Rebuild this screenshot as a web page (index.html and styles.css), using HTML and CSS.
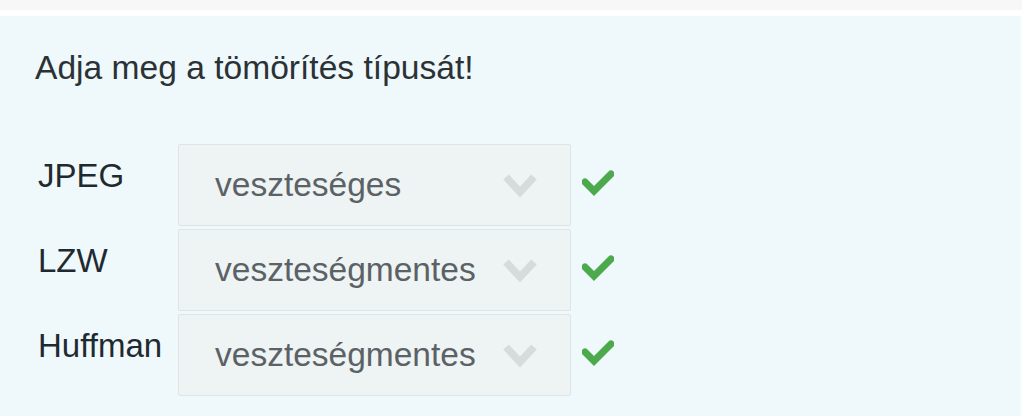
FILE: index.html
```html
<!DOCTYPE html>
<html lang="hu">
<head>
<meta charset="utf-8">
<title>Tömörítés</title>
<link rel="stylesheet" href="styles.css">
</head>
<body>
<div class="topbar"></div>
<div class="gap"></div>
<main class="panel">
  <p class="question">Adja meg a tömörítés típusát!</p>
  <div class="rows">
    <div class="row">
      <span class="label">JPEG</span>
      <div class="select">
        <span class="value">veszteséges</span>
        <svg class="chev" width="36" height="25" viewBox="0 0 36 25"><polyline points="4,4 18,19 32,4" fill="none" stroke="#d6dbdb" stroke-width="7.5" stroke-linejoin="miter"/></svg>
      </div>
      <svg class="check" width="32" height="26" viewBox="0 0 32 26"><polyline points="3,12 12,21 29,4" fill="none" stroke="#4caa4c" stroke-width="7" stroke-linecap="round" stroke-linejoin="miter"/></svg>
    </div>
    <div class="row">
      <span class="label">LZW</span>
      <div class="select">
        <span class="value">veszteségmentes</span>
        <svg class="chev" width="36" height="25" viewBox="0 0 36 25"><polyline points="4,4 18,19 32,4" fill="none" stroke="#d6dbdb" stroke-width="7.5" stroke-linejoin="miter"/></svg>
      </div>
      <svg class="check" width="32" height="26" viewBox="0 0 32 26"><polyline points="3,12 12,21 29,4" fill="none" stroke="#4caa4c" stroke-width="7" stroke-linecap="round" stroke-linejoin="miter"/></svg>
    </div>
    <div class="row">
      <span class="label">Huffman</span>
      <div class="select">
        <span class="value">veszteségmentes</span>
        <svg class="chev" width="36" height="25" viewBox="0 0 36 25"><polyline points="4,4 18,19 32,4" fill="none" stroke="#d6dbdb" stroke-width="7.5" stroke-linejoin="miter"/></svg>
      </div>
      <svg class="check" width="32" height="26" viewBox="0 0 32 26"><polyline points="3,12 12,21 29,4" fill="none" stroke="#4caa4c" stroke-width="7" stroke-linecap="round" stroke-linejoin="miter"/></svg>
    </div>
  </div>
</main>
</body>
</html>
```

FILE: styles.css
```css
html, body {
  margin: 0;
  padding: 0;
  height: 100%;
  background: #ffffff;
  font-family: "Liberation Sans", Arial, sans-serif;
}
body {
  display: flex;
  flex-direction: column;
  overflow: hidden;
}
.topbar {
  height: 10px;
  background: #f7f7f7;
}
.gap {
  height: 6px;
  background: #ffffff;
}
.panel {
  flex: 1;
  background: #eff8fb;
  padding: 28px 0 0 35px;
  border-right: 2px solid #f6fbfc;
}
.question {
  margin: 0;
  font-size: 33.6px;
  line-height: 47px;
  color: #2b3236;
}
.rows {
  margin-top: 53px;
  display: flex;
  flex-direction: column;
  gap: 3px;
}
.row {
  display: flex;
  align-items: flex-start;
}
.label {
  box-sizing: border-box;
  width: 143px;
  padding: 8px 0 0 3px;
  font-size: 33px;
  line-height: 47px;
  color: #1f2a30;
}
.select {
  box-sizing: border-box;
  width: 393px;
  height: 82px;
  border: 1px solid #dfe4e4;
  border-radius: 2px;
  background: #eef3f3;
  display: flex;
  align-items: center;
  padding: 0 32px 0 36px;
}
.value {
  flex: 1;
  font-size: 33.5px;
  color: #5b6266;
  white-space: nowrap;
}
.chev {
  display: block;
  flex: none;
}
.check {
  display: block;
  margin: 26px 0 0 11px;
}
```
